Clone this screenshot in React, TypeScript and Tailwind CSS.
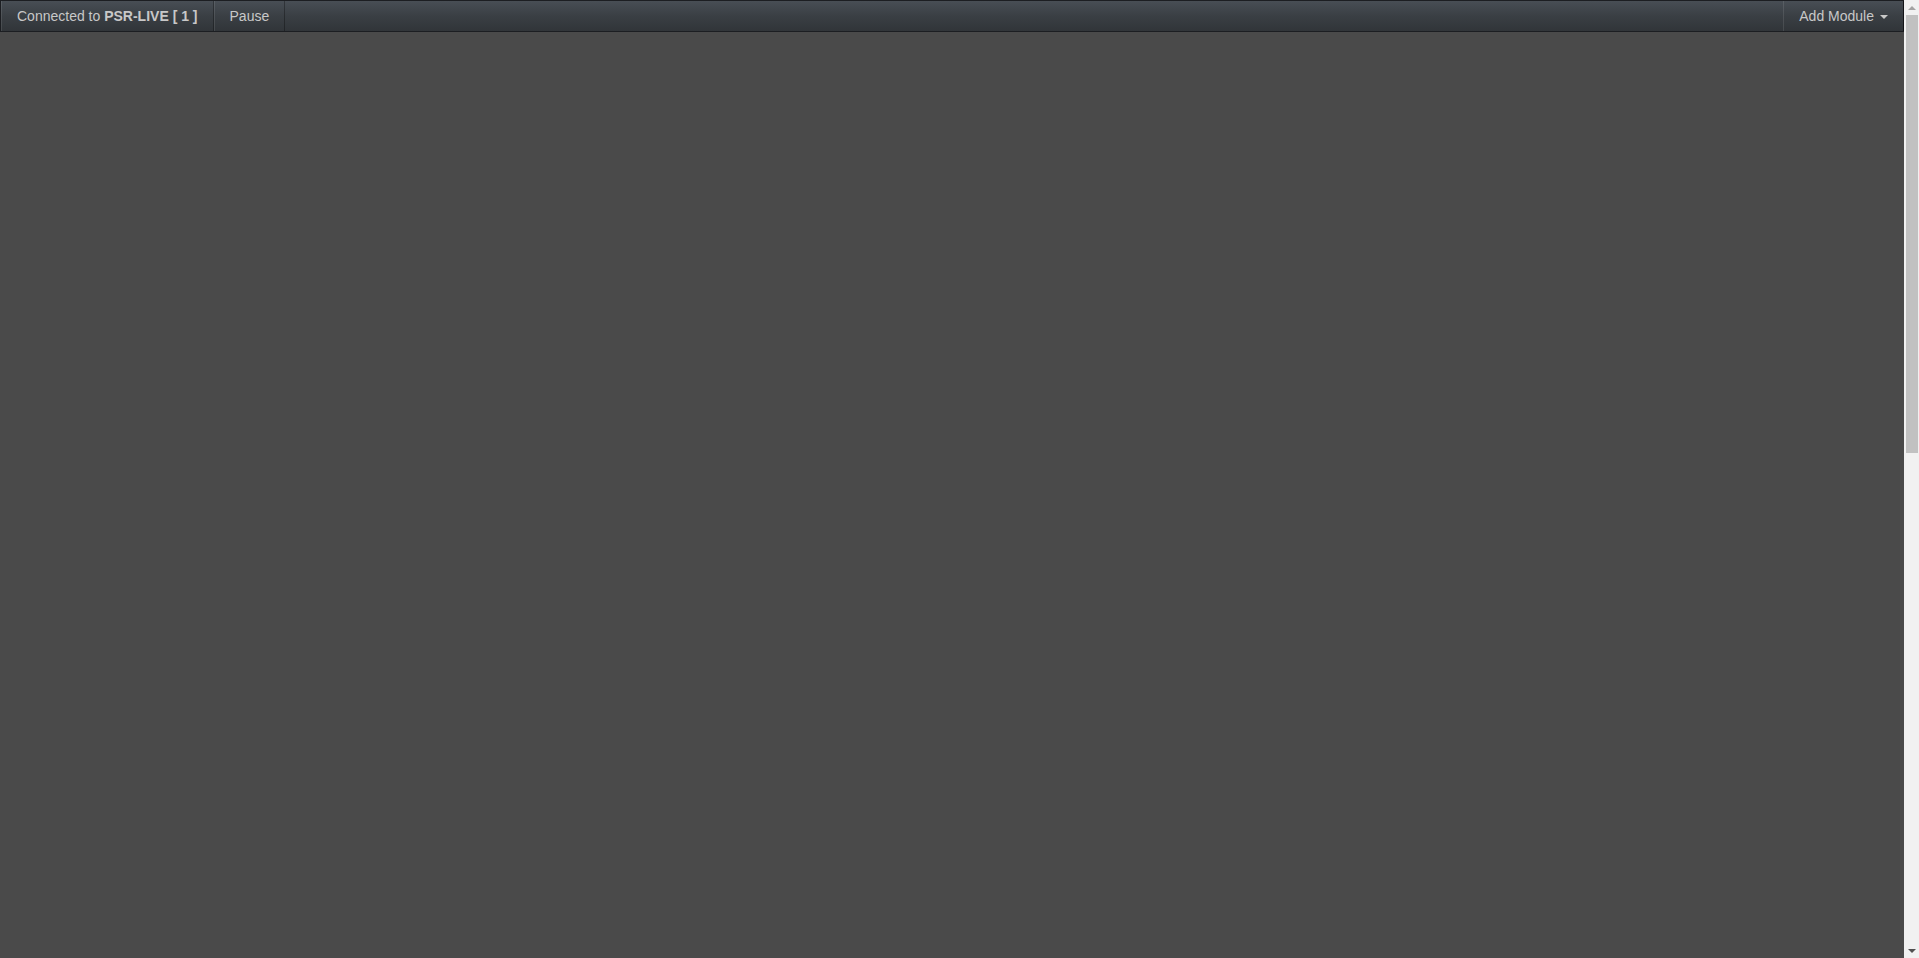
import React from 'react';

function NavItem({ children }: { children: React.ReactNode }) {
  return (
    <div className="flex h-full items-center border-l border-r border-l-white/10 border-r-black/30 px-[15px] text-[14px] text-[#c8c8c8]">
      {children}
    </div>
  );
}

// drawn scrollbar, the page shows one at the right edge
function Scrollbar() {
  return (
    <aside className="flex w-[15px] shrink-0 flex-col bg-[#f1f1f1]">
      <div className="flex h-[15px] items-center justify-center">
        <span className="h-0 w-0 border-x-[4px] border-b-[4px] border-x-transparent border-b-[#a3a3a3]" />
      </div>
      <div className="flex-1 pl-[2px] pr-[1px]">
        <div className="h-[438px] bg-[#c1c1c1]" />
      </div>
      <div className="flex h-[15px] items-center justify-center">
        <span className="h-0 w-0 border-x-[4px] border-t-[4px] border-x-transparent border-t-[#505050]" />
      </div>
    </aside>
  );
}

export default function App() {
  return (
    <div className="flex h-screen bg-[#4a4a4a] font-['Liberation_Sans',Arial,sans-serif]">
      <main className="flex min-w-0 flex-1 flex-col">
        <nav className="flex h-8 shrink-0 items-stretch justify-between border border-[#1c1e22] bg-gradient-to-b from-[#484e55] via-[#3a3f44] to-[#313539]">
          <div className="flex items-stretch">
            <NavItem>
              <span>
                Connected to <b className="font-bold">PSR-LIVE [ 1 ]</b>
              </span>
            </NavItem>
            <NavItem>Pause</NavItem>
          </div>
          <div className="-mr-px flex items-stretch">
            <NavItem>
              <span className="flex items-center">
                Add Module
                <span className="ml-[6px] mt-[2px] inline-block h-0 w-0 border-x-[4px] border-t-[4px] border-x-transparent border-t-[#c8c8c8]" />
              </span>
            </NavItem>
          </div>
        </nav>
      </main>
      <Scrollbar />
    </div>
  );
}
